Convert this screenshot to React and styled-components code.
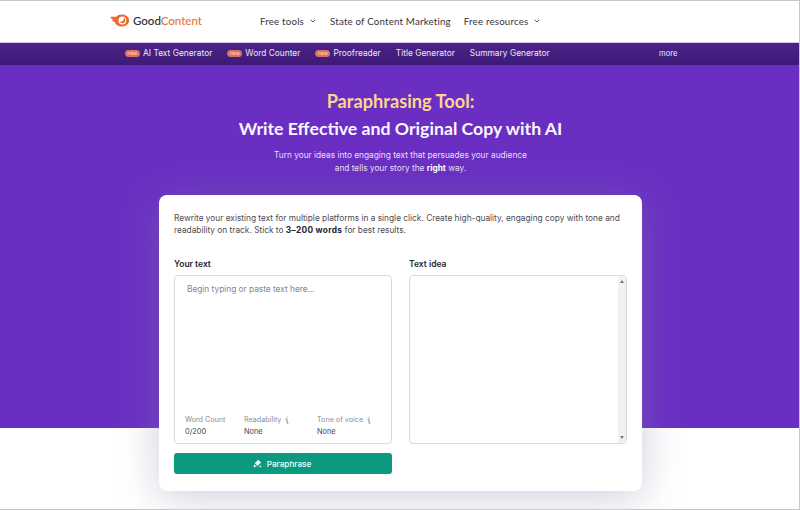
import React from "react";
import styled, { createGlobalStyle } from "styled-components";
import { ChevronDown } from "lucide-react";

const GlobalStyle = createGlobalStyle`
  html, body {
    margin: 0;
    padding: 0;
    background: #fff;
  }
  body {
    font-family: Inter, "Liberation Sans", sans-serif;
  }
`;

// Browser-shot frame: thin grey line on top, right and bottom
const Frame = styled.div`
  width: 800px;
  height: 510px;
  box-sizing: border-box;
  border-top: 1px solid #c8c8c8;
  border-right: 1px solid #c8c8c8;
  border-bottom: 1px solid #c8c8c8;
  overflow: hidden;
  background: #fff;
`;

const TopNav = styled.div`
  height: 39px;
  display: flex;
  align-items: center;
  padding: 0 0 2px 110px;
  border-bottom: 1px solid #d9c9e4;
`;

const Logo = styled.div`
  display: flex;
  align-items: center;
  gap: 3px;
  width: 150px;
  font-family: Lato, "Open Sans", sans-serif;
  font-size: 11.5px;
  font-weight: 500;
  color: #2b2b33;
`;

const LogoAccent = styled.span`
  color: #e8703a;
`;

const NavLinks = styled.div`
  display: flex;
  align-items: center;
  gap: 13px;
`;

const NavLink = styled.div`
  display: flex;
  align-items: center;
  gap: 5px;
  font-family: Lato, "Open Sans", sans-serif;
  font-size: 9.7px;
  letter-spacing: 0.2px;
  color: #34343c;
`;

const SubNav = styled.div`
  height: 20px;
  display: flex;
  align-items: center;
  padding: 0 0 2px 125px;
  background: linear-gradient(180deg, #4a2386 0%, #3e1a78 100%);
  color: #efe6fa;
  font-size: 8.4px;
`;

const SubLinks = styled.div`
  display: flex;
  align-items: center;
  gap: 15px;
  width: 534px;
`;

const SubLink = styled.div`
  display: flex;
  align-items: center;
  gap: 3px;
`;

const NewBadge = styled.span`
  width: 15px;
  height: 7px;
  border-radius: 4px;
  background: #e0705f;
  color: #f8d8d0;
  font-size: 5px;
  line-height: 7px;
  text-align: center;
`;

const More = styled.span`
  font-size: 7.6px;
`;

const Hero = styled.div`
  height: 363px;
  box-sizing: border-box;
  padding: 26px 0 0 2px;
  background: #6a2fc2;
  display: flex;
  flex-direction: column;
  align-items: center;
`;

const HeroTitle = styled.div`
  font-family: Lato, "Open Sans", sans-serif;
  font-size: 18.2px;
  line-height: 20px;
  font-weight: 700;
  color: #fbd58e;
`;

const HeroSubtitle = styled.div`
  margin-top: 7px;
  font-family: Lato, "Open Sans", sans-serif;
  font-size: 17.7px;
  line-height: 22px;
  font-weight: 700;
  color: #faf6ff;
`;

const HeroText = styled.div`
  margin-top: 9px;
  font-size: 8.3px;
  line-height: 13px;
  text-align: center;
  color: #eadffa;

  b {
    font-weight: 700;
    color: #fff;
  }
`;

const Card = styled.div`
  margin-top: 20px;
  width: 483px;
  height: 296px;
  flex-shrink: 0;
  box-sizing: border-box;
  padding: 17px 15px 0 15px;
  background: #fff;
  border-radius: 8px;
  box-shadow: 0 6px 40px rgba(130, 130, 170, 0.4);
`;

const Intro = styled.div`
  font-size: 8.32px;
  line-height: 12px;
  color: #4b4b53;
  white-space: nowrap;

  b {
    font-weight: 700;
    letter-spacing: 0.3px;
    color: #26262c;
  }
`;

const Columns = styled.div`
  margin-top: 22px;
  display: grid;
  grid-template-columns: 218px 218px;
  gap: 17px;
`;

const Column = styled.div`
  display: flex;
  flex-direction: column;
`;

const FieldLabel = styled.div`
  font-size: 8.5px;
  line-height: 12px;
  font-weight: 600;
  color: #26262c;
  margin-bottom: 5px;
`;

const InputBox = styled.div`
  height: 169px;
  box-sizing: border-box;
  border: 1px solid #dadade;
  border-radius: 4px;
  padding: 7px 12px 6px;
  display: flex;
  flex-direction: column;
  justify-content: space-between;
`;

const Placeholder = styled.div`
  font-size: 8.3px;
  line-height: 12px;
  color: #85858d;
`;

const Stats = styled.div`
  display: grid;
  grid-template-columns: 59px 73px 1fr;
  margin-left: -2px;
`;

const Stat = styled.div`
  display: flex;
  flex-direction: column;
  gap: 1px;
`;

const StatName = styled.div`
  display: flex;
  align-items: center;
  gap: 4px;
  font-size: 7.2px;
  line-height: 10px;
  color: #8d8d95;
  white-space: nowrap;
`;

const StatValue = styled.div`
  font-size: 7.4px;
  line-height: 11px;
  color: #45454d;
`;

const ResultBox = styled.div`
  height: 169px;
  box-sizing: border-box;
  border: 1px solid #dadade;
  border-radius: 4px;
  display: flex;
  justify-content: flex-end;
  overflow: hidden;
`;

const ScrollTrack = styled.div`
  width: 8px;
  background: #f1f1f1;
  display: flex;
  flex-direction: column;
  justify-content: space-between;
  align-items: center;
  padding: 4px 0;
`;

const Button = styled.div`
  margin-top: 9px;
  width: 218px;
  height: 21px;
  box-sizing: border-box;
  padding-right: 2px;
  border-radius: 3px;
  background: #0b9a7f;
  color: #f2fffb;
  font-size: 8.2px;
  font-weight: 500;
  display: flex;
  align-items: center;
  justify-content: center;
  gap: 5px;
`;

const FlameLogo = () => (
  <svg width="20" height="13" viewBox="0 0 22 14">
    <path
      d="M0 3.2 C3 3 5 3 7 3 C8.5 1.2 10.5 .4 13 .4 C17.6 .4 21 3.2 21 7 C21 10.8 17.6 13.6 13 13.6 C9 13.6 6 11.4 5 8.4 C3.4 8.4 2.6 7.6 2.2 6.2 L3.8 6 C2.2 5.4 .8 4.6 0 3.2 Z"
      fill="#ee6a2c"
    />
    <circle cx="13.6" cy="7" r="4.3" fill="#fff" />
    <path d="M15.4 3.8 A3.4 3.4 0 1 1 10.6 8.4 C12.8 9 15.6 7.4 15.4 3.8 Z" fill="#ee6a2c" />
  </svg>
);

const PencilIcon = () => (
  <svg width="9" height="9" viewBox="0 0 10 10" fill="#eafff9">
    <path d="M5.8 .8 L9 3.8 L5 7.8 L2 4.8 Z" />
    <path d="M1.4 5.8 L3.9 8.3 L.6 9.2 Z" />
    <rect x="7.2" y="7.4" width="1.8" height="1.6" />
  </svg>
);

const InfoIcon = () => (
  <svg width="4" height="8" viewBox="0 0 4 8" fill="none" stroke="#85858d" strokeWidth="1">
    <path d="M.6 3.2 H2 V7 C2 7.4 2.6 7.5 3.4 7.2" />
    <circle cx="2" cy="1" r=".6" fill="#85858d" stroke="none" />
  </svg>
);

// Small filled arrows at the ends of the scrollbar
const ScrollArrow = ({ down }) => (
  <svg width="4" height="3" viewBox="0 0 4 3" fill="#77777d">
    <path d={down ? "M0 0 H4 L2 3 Z" : "M0 3 H4 L2 0 Z"} />
  </svg>
);

const subLinks = [
  { label: "AI Text Generator", isNew: true },
  { label: "Word Counter", isNew: true },
  { label: "Proofreader", isNew: true },
  { label: "Title Generator" },
  { label: "Summary Generator" },
];

function App() {
  return (
    <Frame>
      <GlobalStyle />
      <TopNav>
        <Logo>
          <FlameLogo />
          <span>
            Good<LogoAccent>Content</LogoAccent>
          </span>
        </Logo>
        <NavLinks>
          <NavLink>
            Free tools <ChevronDown size={8} strokeWidth={2.5} />
          </NavLink>
          <NavLink>State of Content Marketing</NavLink>
          <NavLink>
            Free resources <ChevronDown size={8} strokeWidth={2.5} />
          </NavLink>
        </NavLinks>
      </TopNav>

      <SubNav>
        <SubLinks>
          {subLinks.map((link) => (
            <SubLink key={link.label}>
              {link.isNew && <NewBadge>new</NewBadge>}
              {link.label}
            </SubLink>
          ))}
        </SubLinks>
        <More>more</More>
      </SubNav>

      <Hero>
        <HeroTitle>Paraphrasing Tool:</HeroTitle>
        <HeroSubtitle>Write Effective and Original Copy with AI</HeroSubtitle>
        <HeroText>
          Turn your ideas into engaging text that persuades your audience
          <br />
          and tells your story the <b>right</b> way.
        </HeroText>

        <Card>
          <Intro>
            Rewrite your existing text for multiple platforms in a single click. Create high-quality, engaging copy with tone and
            <br />
            readability on track. Stick to <b>3–200 words</b> for best results.
          </Intro>
          <Columns>
            <Column>
              <FieldLabel>Your text</FieldLabel>
              <InputBox>
                <Placeholder>Begin typing or paste text here...</Placeholder>
                <Stats>
                  <Stat>
                    <StatName>Word Count</StatName>
                    <StatValue>0/200</StatValue>
                  </Stat>
                  <Stat>
                    <StatName>
                      Readability
                      <InfoIcon />
                    </StatName>
                    <StatValue>None</StatValue>
                  </Stat>
                  <Stat>
                    <StatName>
                      Tone of voice
                      <InfoIcon />
                    </StatName>
                    <StatValue>None</StatValue>
                  </Stat>
                </Stats>
              </InputBox>
              <Button>
                <PencilIcon />
                Paraphrase
              </Button>
            </Column>
            <Column>
              <FieldLabel>Text idea</FieldLabel>
              <ResultBox>
                <ScrollTrack>
                  <ScrollArrow />
                  <ScrollArrow down />
                </ScrollTrack>
              </ResultBox>
            </Column>
          </Columns>
        </Card>
      </Hero>
    </Frame>
  );
}

export default App;
